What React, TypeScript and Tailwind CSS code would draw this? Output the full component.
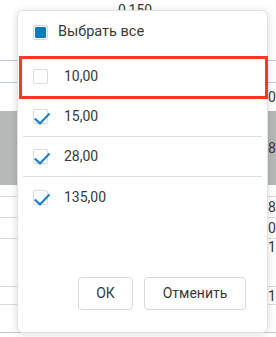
import { useState } from 'react';

const font = { fontFamily: 'Roboto, "Noto Sans", Arial, sans-serif' };

const values = [
  { label: '10,00', checked: false },
  { label: '15,00', checked: true },
  { label: '28,00', checked: true },
  { label: '135,00', checked: true },
];

function Check({ checked }: { checked: boolean }) {
  return (
    <span className="relative block w-[15px] h-[15px] shrink-0 rounded-[2px] border border-[#dcdcdc] bg-white">
      {checked && (
        <svg className="absolute left-0 top-0" width="16" height="16" viewBox="0 0 16 16" fill="none">
          <path d="M1.5 9.2 L6 13.4 L14.8 4.2" stroke="#1b80c4" strokeWidth="2.2" strokeLinecap="square" />
        </svg>
      )}
    </span>
  );
}

export default function App() {
  const [items] = useState(values);

  return (
    <div className="relative w-[276px] h-[337px] overflow-hidden bg-white text-[#383838]" style={font}>
      {/* table underneath */}
      <div className="flex flex-col text-[14px] leading-[16px]">
        <div className="h-[61px] border-b border-[#bccbd6] pt-[2px] pl-[118px]">0,150</div>
        <div className="h-[22px] border-b border-[#bccbd6]" />
        <div className="h-[28px] flex items-center justify-end">
          <span className="w-[8px]">0</span>
        </div>
        <div className="h-[74px] bg-[#b5b9b8] flex items-center justify-end">
          <span className="w-[8px]">8</span>
        </div>
        <div className="h-[12px] border-b border-[#dadada]" />
        <div className="h-[21px] border-b border-[#dadada] flex items-center justify-end">
          <span className="w-[8px]">8</span>
        </div>
        <div className="h-[21px] border-b border-[#dadada] flex items-center justify-end">
          <span className="w-[8px]">0</span>
        </div>
        <div className="h-[48px] border-b border-[#dadada] flex items-start justify-end">
          <span className="w-[8px]">1</span>
        </div>
        <div className="h-[18px] border-b border-[#dadada] flex items-end justify-end">
          <span className="w-[8px]">1</span>
        </div>
        <div className="h-[28px] border-b border-[#c8c8c8]" />
      </div>

      {/* filter popup */}
      <div className="absolute left-[17px] top-[10px] w-[251px] h-[323px] flex flex-col rounded-[6px] border border-[#e2e2e2] bg-white shadow-[0_1px_8px_rgba(0,0,0,0.14)]">
        <label className="h-[42px] flex items-center gap-[10px] pl-[15px] text-[14.5px]">
          <span className="block w-[15px] h-[15px] rounded-[2px] border border-[#d4d4d4] bg-white p-[1px]">
            <span className="block w-full h-full rounded-[1px] bg-[#0a7bbf]" />
          </span>
          Выбрать все
        </label>
        <div className="mt-[4px] flex flex-col mx-[5px] text-[14px]">
          {items.map((it, i) => (
            <div
              key={it.label}
              className={`h-[40px] flex items-center gap-[16px] pl-[10px] ${i < items.length - 1 ? 'border-b border-[#dedede]' : ''}`}
            >
              <Check checked={it.checked} />
              <span>{it.label}</span>
            </div>
          ))}
        </div>
        <div className="flex-1" />
        <div className="flex justify-end gap-[11px] pr-[21px] pb-[22px] text-[14px]">
          <button className="w-[55px] h-[33px] rounded-[4px] border border-[#d9d9d9] bg-white">ОК</button>
          <button className="w-[102px] h-[33px] rounded-[4px] border border-[#d9d9d9] bg-white">Отменить</button>
        </div>

        {/* highlighted row marker */}
        <div className="absolute left-[1px] top-[45px] w-[249px] h-[43px] border-[3px] border-[#f43c1e]" />
      </div>
    </div>
  );
}
